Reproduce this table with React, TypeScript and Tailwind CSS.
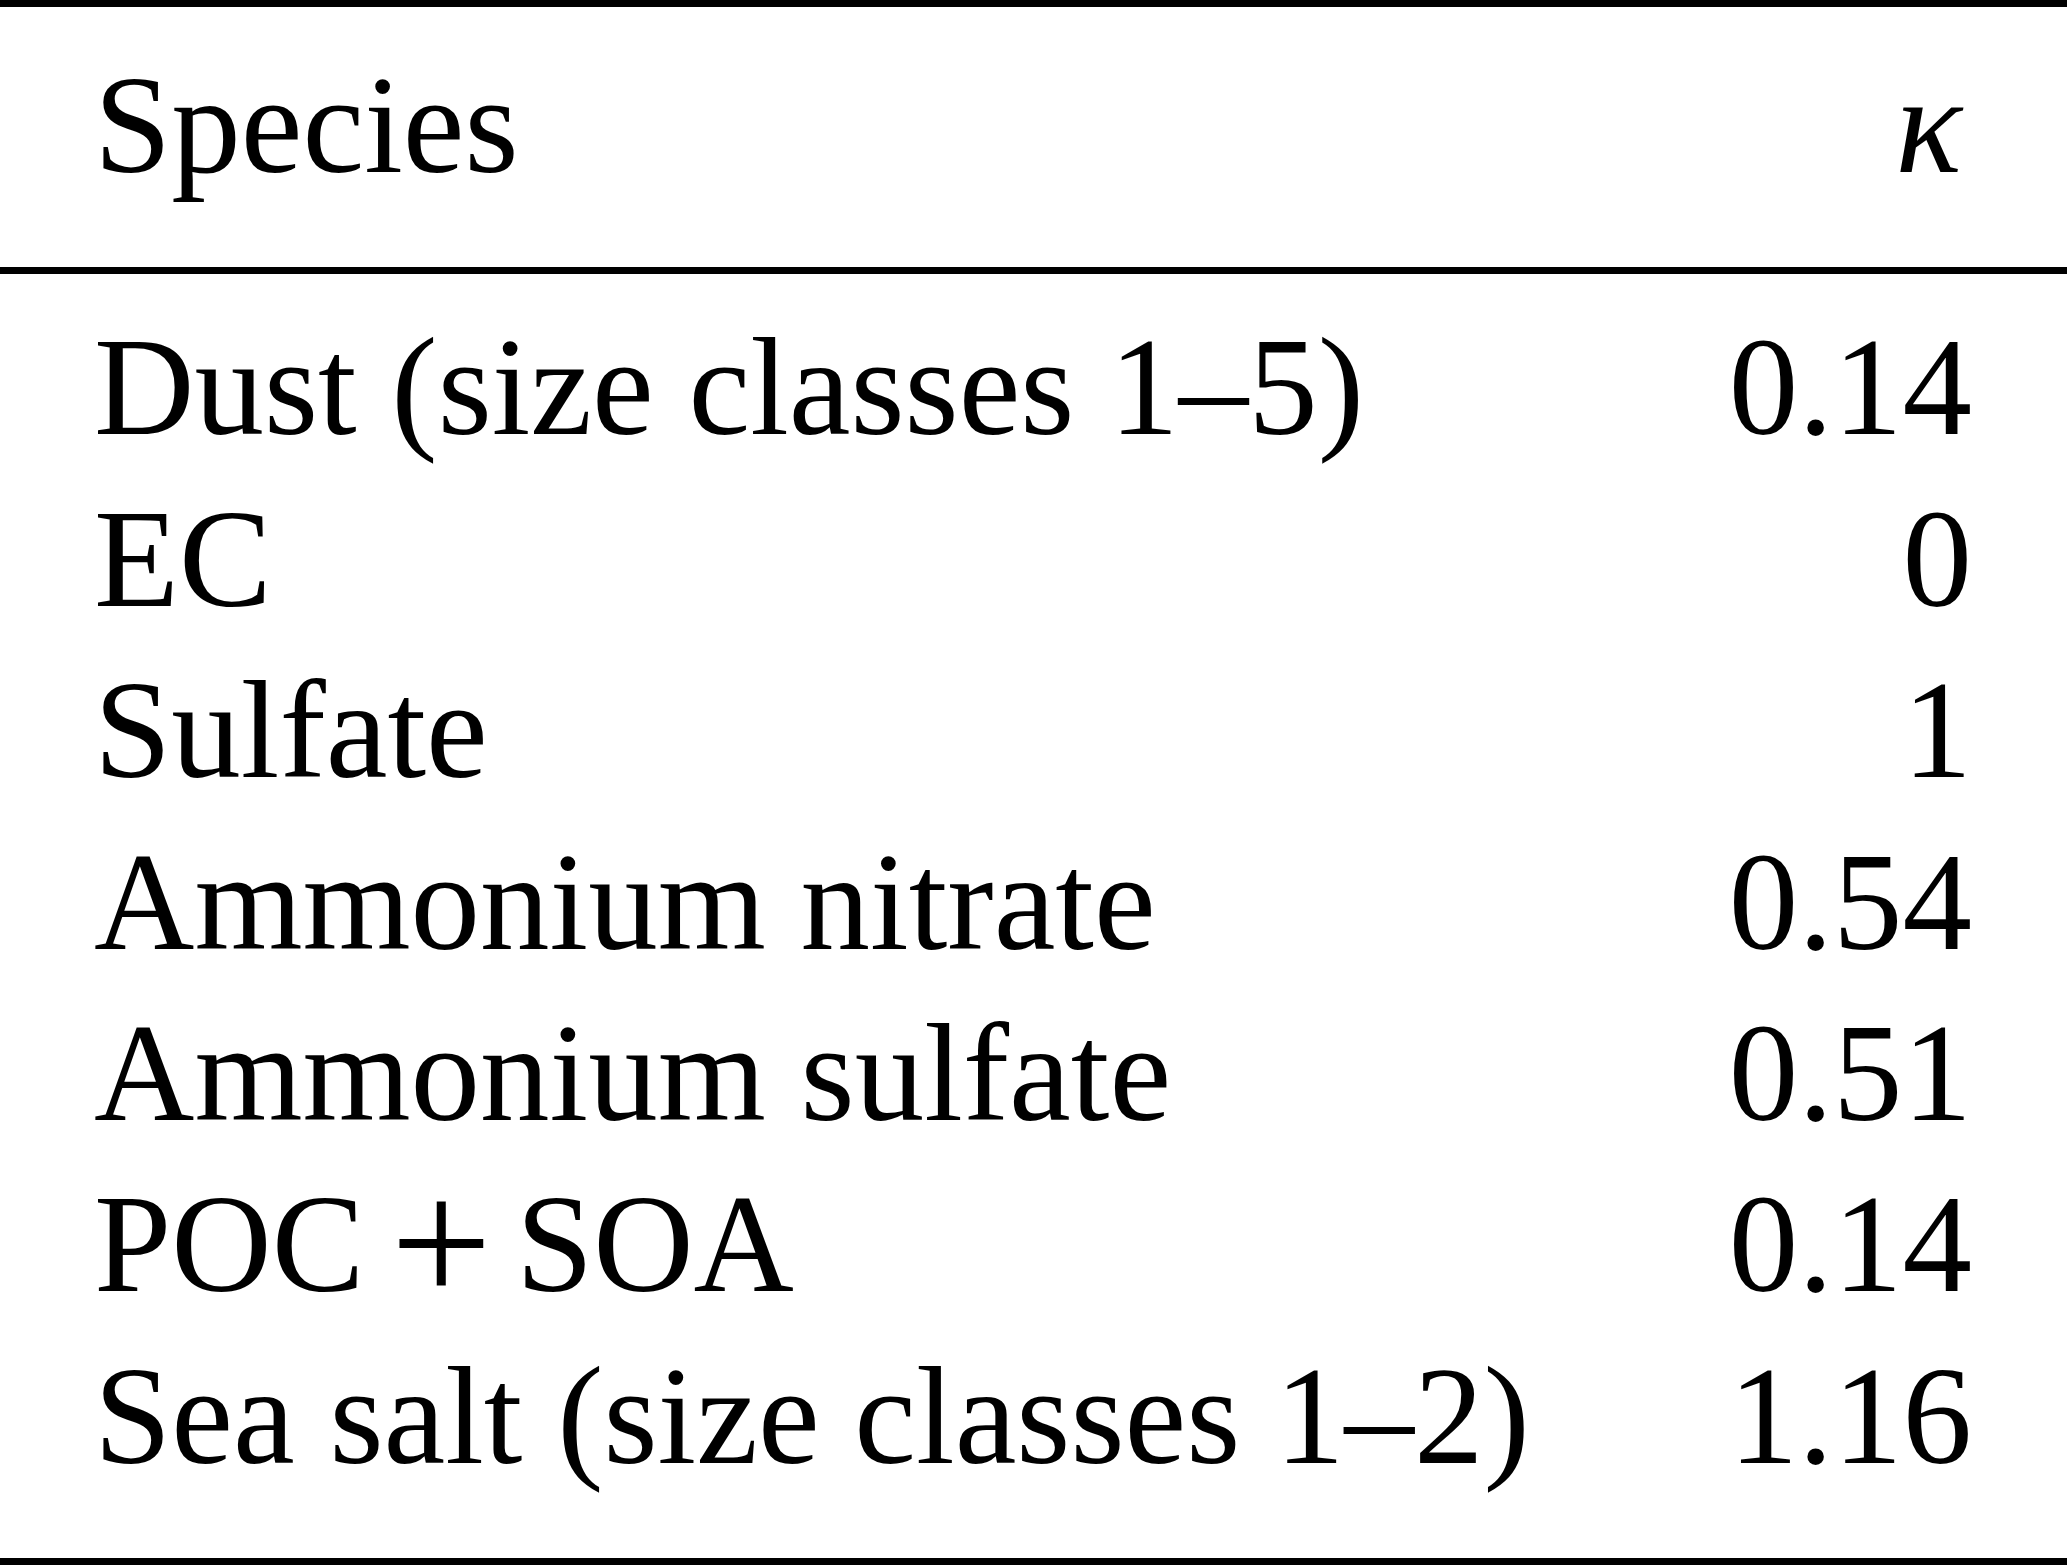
const rows: { name: React.ReactNode; kappa: string }[] = [
  { name: 'Dust (size classes 1–5)', kappa: '0.14' },
  { name: 'EC', kappa: '0' },
  { name: 'Sulfate', kappa: '1' },
  { name: 'Ammonium nitrate', kappa: '0.54' },
  { name: 'Ammonium sulfate', kappa: '0.51' },
  {
    name: (
      <>
        POC
        <span className="ml-[26px] mr-[24px] text-[180px] font-light leading-[0] align-[-12px]">+</span>
        SOA
      </>
    ),
    kappa: '0.14',
  },
  { name: 'Sea salt (size classes 1–2)', kappa: '1.16' },
];

export default function App() {
  return (
    <div className="w-[2067px] h-[1566px] bg-white text-black font-['Liberation_Serif',serif] text-[139px] leading-[171.4px]">
      <div className="border-t-[7px] border-b-[7px] border-black">
        {/* Header */}
        <div className="flex justify-between pl-[94px] pr-[95px] pt-[33px] pb-[56px] border-b-[7px] border-black">
          <span>Species</span>
          <span className="italic pr-[10px]">κ</span>
        </div>

        {/* Body */}
        <div className="pl-[94px] pr-[95px] pt-[28px] pb-[56px]">
          {rows.map((r, i) => (
            <div key={i} className="flex justify-between whitespace-nowrap">
              <span>{r.name}</span>
              <span>{r.kappa}</span>
            </div>
          ))}
        </div>
      </div>
    </div>
  );
}
